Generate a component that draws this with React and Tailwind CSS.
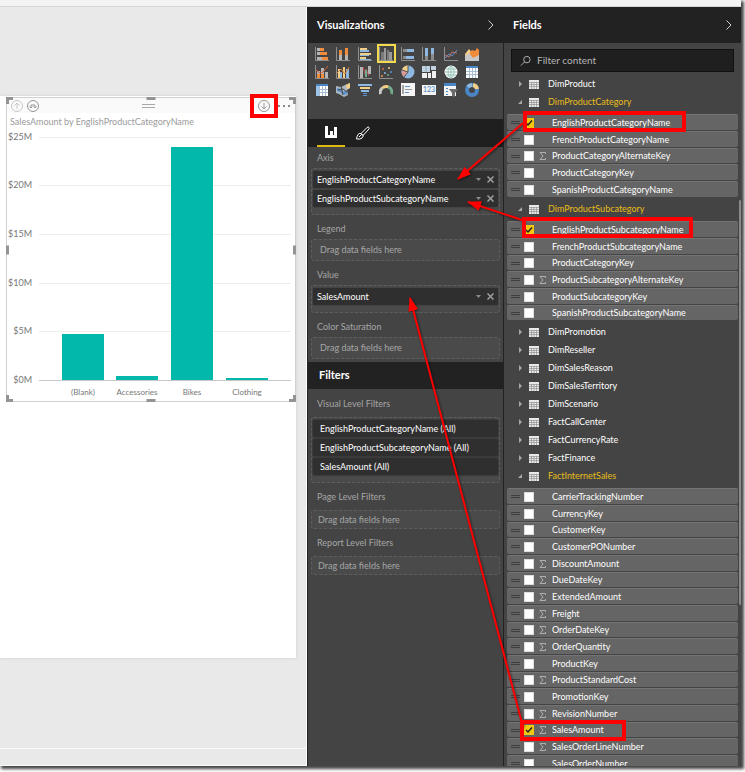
import { useState } from 'react';
import clsx from 'clsx';

const AXIS_TICKS = [
  { label: '$25M', y: 7 },
  { label: '$20M', y: 55 },
  { label: '$15M', y: 104 },
  { label: '$10M', y: 153 },
  { label: '$5M', y: 201 },
  { label: '$0M', y: 250 },
];

const BARS = [
  { label: '(Blank)', x: 55, top: 204 },
  { label: 'Accessories', x: 109, top: 246 },
  { label: 'Bikes', x: 164, top: 17 },
  { label: 'Clothing', x: 219, top: 248 },
];

const TABLES = [
  { name: 'DimProduct' },
  {
    name: 'DimProductCategory',
    fields: [
      { name: 'EnglishProductCategoryName', checked: true },
      { name: 'FrenchProductCategoryName' },
      { name: 'ProductCategoryAlternateKey', sum: true },
      { name: 'ProductCategoryKey' },
      { name: 'SpanishProductCategoryName' },
    ],
  },
  {
    name: 'DimProductSubcategory',
    fields: [
      { name: 'EnglishProductSubcategoryName', checked: true },
      { name: 'FrenchProductSubcategoryName' },
      { name: 'ProductCategoryKey' },
      { name: 'ProductSubcategoryAlternateKey', sum: true },
      { name: 'ProductSubcategoryKey' },
      { name: 'SpanishProductSubcategoryName' },
    ],
  },
  { name: 'DimPromotion' },
  { name: 'DimReseller' },
  { name: 'DimSalesReason' },
  { name: 'DimSalesTerritory' },
  { name: 'DimScenario' },
  { name: 'FactCallCenter' },
  { name: 'FactCurrencyRate' },
  { name: 'FactFinance' },
  {
    name: 'FactInternetSales',
    fields: [
      { name: 'CarrierTrackingNumber' },
      { name: 'CurrencyKey' },
      { name: 'CustomerKey' },
      { name: 'CustomerPONumber' },
      { name: 'DiscountAmount', sum: true },
      { name: 'DueDateKey', sum: true },
      { name: 'ExtendedAmount', sum: true },
      { name: 'Freight', sum: true },
      { name: 'OrderDateKey', sum: true },
      { name: 'OrderQuantity', sum: true },
      { name: 'ProductKey' },
      { name: 'ProductStandardCost', sum: true },
      { name: 'PromotionKey' },
      { name: 'RevisionNumber', sum: true },
      { name: 'SalesAmount', sum: true, checked: true },
      { name: 'SalesOrderLineNumber', sum: true },
      { name: 'SalesOrderNumber' },
    ],
  },
];

const O = '#f08c3c';
const B = '#8db8e0';
const Y = '#f3cf86';
const G = '#8c8c8c';

const AxisLines = () => <path d="M.5 0v13.5H14" fill="none" stroke="#909090" />;

const TableIcon = ({ head = '#4a86c5' }) => (
  <>
    <path d="M1 1h12v12H1z" fill="#fff" />
    <path d="M1 1h12v2H1z" fill={head} />
    <path d="M1 6.5h12M1 9.5h12M4.5 3v10M7.5 3v10M10.5 3v10" stroke="#a9bdd2" fill="none" />
  </>
);

// Gallery of visual types, left to right, top to bottom
const VISUALS = [
  ['Stacked bar chart', <><AxisLines /><path d="M2 1h5v3H2zM2 5h3v3H2zM2 10h6v3H2z" fill="#b5b5b5" /><path d="M5 1h4v3H5zM5 5h7v3H5zM7 10h6v3H7z" fill={O} /></>],
  ['Stacked column chart', <><AxisLines /><path d="M3 8h3v5H3zM9 6h3v7H9z" fill="#b5b5b5" /><path d="M3 3h3v5H3zM9 1h3v7H9z" fill={O} /></>],
  ['Clustered bar chart', <><AxisLines /><path d="M2 1h7v2H2zM2 6h11v2H2zM2 10h6v2H2z" fill={Y} /><path d="M2 3h9v2H2zM2 8h9v1H2zM2 12h11v1H2z" fill={B} /></>],
  ['Clustered column chart', <><AxisLines /><path d="M2 5h3v8H2zM8 3h2v10H8z" fill="#7b7b7b" /><path d="M5 1h2v12H5zM10 5h3v8h-3z" fill="#9a9a9a" /></>],
  ['100% stacked bar chart', <><AxisLines /><path d="M2 2h5v3H2zM2 9h3v3H2z" fill={G} /><path d="M6 2h7v3H6zM5 9h8v3H5z" fill={B} /></>],
  ['100% stacked column chart', <><AxisLines /><path d="M3 8h3v5H3zM9 7h3v6H9z" fill={G} /><path d="M3 1h3v8H3zM9 1h3v6H9z" fill={B} /></>],
  ['Line chart', <><AxisLines /><path d="M1 11l4-4 3 2 5-6" fill="none" stroke="#5b93cf" /><path d="M1 8l4 2 3-5 5 1" fill="none" stroke="#c4736a" /></>],
  ['Area chart', <><path d="M0 7l4-5 4 5v7H0z" fill={Y} /><path d="M5 5l2-2 3 1 2-3 2 2v8H5z" fill={O} /><path d="M0 9l4-3 4 5 6-3v6H0z" fill="#c8c8c8" /></>],
  ['Line and stacked column chart', <><AxisLines /><path d="M2 6h3v7H2zM6 3h3v10H6zM10 7h3v6h-3z" fill="#b5b5b5" /><path d="M2 9h3v4H2zM6 9h3v4H6z" fill={O} /><path d="M1 5l4 3 3-1 5-6" fill="none" stroke="#d8603b" /></>],
  ['Line and clustered column chart', <><AxisLines /><path d="M2 4h2v9H2zM7 2h2v11H7z" fill={Y} /><path d="M4 7h2v6H4zM10 4h3v9h-3z" fill={B} /><path d="M1 8l4-4 4 5 4-7" fill="none" stroke="#d8803b" /></>],
  ['Waterfall chart', <><AxisLines /><path d="M2 2h3v11H2zM10 1h3v8h-3z" fill="#b5b5b5" /><path d="M5 2l3 10V4l3 7" fill="none" stroke="#c4525a" /><path d="M7 5h2v7H7z" fill="#6fae8d" /></>],
  ['Scatter chart', <><AxisLines /><circle cx="4" cy="4" r="1" fill="#e06a4a" /><circle cx="6" cy="8" r="1" fill={B} /><circle cx="10" cy="3" r="1" fill={Y} /><circle cx="9" cy="10" r="1" fill="#6fae8d" /><circle cx="12" cy="7" r="1" fill="#5b93cf" /><circle cx="3" cy="11" r="1" fill={O} /></>],
  ['Pie chart', <><circle cx="7" cy="7" r="6.5" fill={B} /><path d="M7 7V.5A6.5 6.5 0 0 0 1 5z" fill={Y} /><path d="M7 7L1 5a6.5 6.5 0 0 0 2 7z" fill="#d89a93" /><path d="M7 .5V7L3 12M7 7L1 5" stroke="#555" fill="none" /></>],
  ['Treemap', <><path d="M0 1h8v6H0zM9 1h5v4H9z" fill="#c3d2e2" /><path d="M0 8h5v5H0zM6 8h3v5H6zM10 6h4v7h-4z" fill="#f0f0f0" /><path d="M4 1v6" stroke="#8aa" /></>],
  ['Map', <><circle cx="7" cy="7" r="6.5" fill="#fff" /><path d="M1 7h12M2 4h10M2 10h10M7 1v12" stroke="#8fbfb2" fill="none" /><ellipse cx="7" cy="7" rx="3" ry="6" fill="none" stroke="#8fbfb2" /></>],
  ['Table', <TableIcon />],
  ['Matrix', <><TableIcon /><path d="M1 3h3v10H1z" fill="#9cc3ea" /></>],
  ['Filled map', <><path d="M0 3l5 1 4-2 5-2v5l-3 2 1 5-4 2-5-3-3-1z" fill="#aeb7bf" /><path d="M1 5l4 1 2 3 4-2v4l-3 1-4-3-3-1z" fill="#5b93cf" /><path d="M10 2l4-2v5l-3 1z" fill={Y} /><path d="M2 7l5-1 4 3M5 3l2 9" stroke="#444" fill="none" /></>],
  ['Funnel', <><path d="M0 1h14v2H0z" fill={B} /><path d="M2 4h10v2H2z" fill={Y} /><path d="M3 7h8v2H3z" fill={B} /><path d="M5 10h4v1H5zM5 12h4v1H5z" fill="#5b93cf" /></>],
  ['Gauge', <g fill="none" strokeWidth="3"><path d="M1.500 11a5.500 5.500 0 0 1 2-6" stroke="#c9c9c9" /><path d="M3.500 5a5.500 5.500 0 0 1 6-1" stroke={Y} /><path d="M9.500 4a5.500 5.500 0 0 1 3 7" stroke="#6fae8d" /></g>],
  ['Multi-row card', <><path d="M0 0h14v13H0z" fill="#f4f4f4" /><path d="M2 2v9" stroke="#555" /><path d="M4 3.500h5M4 9.500h4" stroke="#5b93cf" /><path d="M4 6.500h7" stroke="#999" /></>],
  ['Card', <><path d="M0 2h14v10H0z" fill="#f4f4f4" /><text x="7" y="9" fontSize="7" textAnchor="middle" fill="#3f7fc0">123</text></>],
  ['Slicer', <><path d="M0 0h12v13H0z" fill="#f4f4f4" /><path d="M0 0h12v3H0z" fill="#4a86c5" /><path d="M2 5.500h2M2 8.500h2M2 11.500h2" stroke="#4a86c5" /><path d="M5 6h9l-3 4v4l-3-1v-3z" fill="#6c6c6c" /></>],
  ['Donut chart', <g fill="none" strokeWidth="4"><circle cx="7" cy="7" r="5" stroke="#4a86c5" /><path d="M3 4a5 5 0 0 1 4-2" stroke={B} /><path d="M8 2a5 5 0 0 1 4 4" stroke={Y} /></g>],
];

const Chevron = () => (
  <svg className="h-3 w-2" viewBox="0 0 8 12" fill="none" stroke="#d0d0d0">
    <path d="M1.500 1.500L6 6l-4.500 4.500" />
  </svg>
);

const PanelHeader = ({ title }) => (
  <div className="flex h-9 shrink-0 items-center justify-between bg-[#222] pl-[9px] pr-2">
    <h2 className="text-[11px] font-bold text-white">{title}</h2>
    <button type="button" aria-label={`Collapse ${title}`}>
      <Chevron />
    </button>
  </div>
);

const Well = ({ label, children, gap = 'mt-0.5', empty = 'h-[22px] pl-2' }) => (
  <section>
    <h3 className="pl-1.5 text-[9px] leading-4 text-[#a6a6a6]">{label}</h3>
    <div className={clsx('rounded-[3px] border border-dashed border-[#5e5e5e] bg-[#4a4a4a]', gap)}>
      {children ? (
        <div className="flex flex-col gap-0.5 px-px pb-[7px] pt-0.5">{children}</div>
      ) : (
        <p className={clsx('-my-px flex items-center text-[9px] text-[#a6a6a6]', empty)}>Drag data fields here</p>
      )}
    </div>
  </section>
);

const FieldPill = ({ name }) => (
  <div className="flex h-[17px] items-center rounded-[2px] bg-[#2f2f2f] pl-1 pr-1 text-[9px] text-white shadow-[0_0_1px_#1c1c1c]">
    <span className="flex-1 whitespace-nowrap">{name}</span>
    <button type="button" aria-label={`${name} options`} className="mr-1.5">
      <svg className="h-[3px] w-[5px]" viewBox="0 0 5 3" fill="#8a8a8a"><path d="M0 0h5L2.500 3z" /></svg>
    </button>
    <button type="button" aria-label={`Remove ${name}`}>
      <svg className="size-[7px]" viewBox="0 0 7 7" stroke="#a0a0a0" strokeWidth="1.500"><path d="M.5.5l6 6M6.500.5l-6 6" /></svg>
    </button>
  </div>
);

const FilterPill = ({ children }) => (
  <button type="button" className="flex h-[17px] items-center whitespace-nowrap rounded-[2px] bg-[#2f2f2f] pl-[7px] text-[9px] text-white shadow-[0_0_1px_1px_#3a3a3a]">
    {children}
  </button>
);

const ResizeHandles = () => (
  <>
    <i className="absolute -left-px -top-px size-[7px] border-l-3 border-t-3 border-[#939393]" />
    <i className="absolute -right-px -top-px size-[7px] border-r-3 border-t-3 border-[#939393]" />
    <i className="absolute -bottom-px -left-px size-[7px] border-b-3 border-l-3 border-[#939393]" />
    <i className="absolute -bottom-px -right-px size-[7px] border-b-3 border-r-3 border-[#939393]" />
    <i className="absolute -top-px left-1/2 h-[3px] w-[9px] -translate-x-1/2 bg-[#939393]" />
    <i className="absolute -bottom-px left-1/2 h-[3px] w-[9px] -translate-x-1/2 bg-[#939393]" />
    <i className="absolute -left-px top-1/2 h-[9px] w-[3px] -translate-y-1/2 bg-[#939393]" />
    <i className="absolute -right-px top-1/2 h-[9px] w-[3px] -translate-y-1/2 bg-[#939393]" />
  </>
);

const ColumnChart = () => (
  <div className="relative border border-[#d0d0d0] bg-white">
    <ResizeHandles />
    <div className="flex h-[15px] items-center bg-[#fafafa] pl-1 pr-[5px]">
      <button type="button" aria-label="Drill up" className="mr-1">
        <svg className="size-3" viewBox="0 0 12 12" fill="none" stroke="#c8c8c8">
          <circle cx="6" cy="6" r="5.500" />
          <path d="M6 9V3M3.500 5.500L6 3l2.500 2.500" />
        </svg>
      </button>
      <button type="button" aria-label="Expand to next level">
        <svg className="size-3" viewBox="0 0 12 12" fill="none" stroke="#979797">
          <circle cx="6" cy="6" r="5.500" />
          <path d="M4 7.500V5h4v2.500M2.500 6.500L4 8l1.500-1.500M6.500 6.500L8 8l1.500-1.500" />
        </svg>
      </button>
      <span className="mx-auto h-1 w-[13px] border-y border-[#a8a8a8]" />
      <span className="relative mr-2">
        <button type="button" aria-label="Drill down" className="block">
          <svg className="size-3" viewBox="0 0 12 12" fill="none" stroke="#979797">
            <circle cx="6" cy="6" r="5.500" />
            <path d="M6 3v6M3.500 6.500L6 9l2.500-2.500" />
          </svg>
        </button>
        <i className="absolute -inset-x-2 -inset-y-[6px] border-4 border-[#ff0000]" />
      </span>
      <button type="button" aria-label="More options">
        <svg className="h-[2px] w-3" viewBox="0 0 12 2" fill="#8a8a8a">
          <path d="M0 0h2v2H0zM5 0h2v2H5zM10 0h2v2h-2z" />
        </svg>
      </button>
    </div>
    <h1 className="pl-[3px] pt-px text-[9px] leading-4 text-[#9a9a9a]">SalesAmount by EnglishProductCategoryName</h1>
    <svg className="block w-full" viewBox="0 0 288 271" fontSize="8">
      {AXIS_TICKS.map(({ label, y }) => (
        <g key={label}>
          <path d={`M32 ${y}.5h252`} stroke={label === '$0M' ? '#c8c8c8' : '#ececec'} />
          <text x="25" y={y + 3} textAnchor="end" fill="#777" fontSize="9">{label}</text>
        </g>
      ))}
      {BARS.map(({ label, x, top }) => (
        <g key={label}>
          <rect x={x} y={top} width="42" height={250 - top} fill="#01b8aa" />
          <text x={x + 21} y="265" textAnchor="middle" fill="#777">{label}</text>
        </g>
      ))}
    </svg>
  </div>
);

const VisualizationsPanel = () => (
  <aside className="flex w-[196px] flex-col border-r border-[#222] bg-[#444]">
    <PanelHeader title="Visualizations" />
    <div className="h-[76px] shrink-0 pl-[5px] pt-0.5">
      <div className="grid w-[172px] grid-cols-8 gap-y-px">
        {VISUALS.map(([name, icon]) => (
          <button
            key={name}
            type="button"
            aria-label={name}
            className={clsx(
              'flex size-[17px] items-center justify-center',
              name === 'Clustered column chart' && 'outline-2 -outline-offset-1 outline-[#f2d94e]'
            )}
          >
            <svg className="size-[14px]" viewBox="0 0 14 14">{icon}</svg>
          </button>
        ))}
      </div>
    </div>
    <div className="flex h-7 shrink-0 bg-[#1f1f1f] pl-[9px]">
      <button type="button" aria-label="Fields" className="flex w-7 items-center justify-center border-b-2 border-[#e0b90f]">
        <svg className="h-3 w-3" viewBox="0 0 12 12">
          <path d="M0 0h3v9h2V5h3v4h1V1h3v11H0z" fill="#fff" />
        </svg>
      </button>
      <button type="button" aria-label="Format" className="ml-1 flex w-7 items-center justify-center">
        <svg className="size-[14px]" viewBox="0 0 14 14" fill="none" stroke="#fff">
          <path d="M5 7.500L11 1.500q1.500-1 2 0t0 1.500L7 9.500z" />
          <path d="M5 7.500q-2-.5-3 1T.5 13q4 .5 5.500-1t1-2.500z" />
          <path d="M3 11l3-3" />
        </svg>
      </button>
    </div>
    <div className="flex flex-col gap-1.5 px-[3px] pb-0.5 pt-[3px]">
      <Well label="Axis">
        <FieldPill name="EnglishProductCategoryName" />
        <FieldPill name="EnglishProductSubcategoryName" />
      </Well>
      <Well label="Legend" />
      <Well label="Value">
        <FieldPill name="SalesAmount" />
      </Well>
      <Well label="Color Saturation" />
    </div>
    <h2 className="mt-px flex h-[27px] shrink-0 items-center bg-[#222] pl-[11px] text-[11px] font-bold text-white">Filters</h2>
    <div className="flex flex-col gap-1.5 px-[3px] pt-[7px]">
      <Well label="Visual Level Filters" gap="mt-[5px]">
        <FilterPill>EnglishProductCategoryName (All)</FilterPill>
        <FilterPill>EnglishProductSubcategoryName (All)</FilterPill>
        <FilterPill>SalesAmount (All)</FilterPill>
      </Well>
      <Well label="Page Level Filters" gap="mt-[5px]" empty="h-[19px] pl-1.5" />
      <Well label="Report Level Filters" gap="mt-[5px]" empty="h-[19px] pl-1.5" />
    </div>
  </aside>
);

const FieldRow = ({ table, field }) => {
  const [checked, setChecked] = useState(Boolean(field.checked));
  const id = `${table}-${field.name}`;

  return (
    <li className="flex h-4 items-center rounded-[2px] border-t border-[#747474] bg-[#656565] pl-1 nth-[3n]:h-[15px]">
      <span className="h-[3px] w-[9px] border-y border-[#3e3e3e]" />
      <span className="relative ml-1 size-2.5">
        <input
          id={id}
          type="checkbox"
          checked={checked}
          onChange={(e) => setChecked(e.target.checked)}
          className="block size-2.5 appearance-none border border-[#ddd] bg-white checked:border-[#f2c811] checked:bg-[#f2c811]"
        />
        {checked && (
          <svg className="pointer-events-none absolute inset-0 size-2.5" viewBox="0 0 10 10" fill="none" stroke="#222" strokeWidth="1.500">
            <path d="M2 5l2 2 4-4.500" />
          </svg>
        )}
      </span>
      <span className="w-[18px] pl-[5px]">
        {field.sum && (
          <svg className="h-2 w-[7px]" viewBox="0 0 7 8" fill="none" stroke="#b0b0b0">
            <path d="M6.500 2V.5H1L4 4 1 7.500h5.500V6" />
          </svg>
        )}
      </span>
      <label htmlFor={id} className="whitespace-nowrap text-[9px] text-white">{field.name}</label>
    </li>
  );
};

const TableNode = ({ table }) => {
  const open = Boolean(table.fields);

  return (
    <li>
      <button type="button" aria-expanded={open} className="flex h-[18px] w-full items-center pl-[10px]">
        <svg className="mr-1.5 size-[6px]" viewBox="0 0 6 6" fill="#a8a8a8">
          <path d={open ? 'M5 1v4H1z' : 'M2 0l3 3-3 3z'} />
        </svg>
        <svg className="mr-[9px] h-[9px] w-[10px]" viewBox="0 0 10 9">
          <path d="M0 0h10v9H0z" fill="#e8e8e8" />
          <path d="M0 2.500h10M0 4.500h10M0 6.500h10M2.500 2v7M5 2v7M7.500 2v7" stroke="#777" strokeWidth=".5" />
        </svg>
        <span className={clsx('whitespace-nowrap text-[9px]', open ? 'text-[#e8bd1a]' : 'text-white')}>{table.name}</span>
      </button>
      {open && (
        <ul className="flex flex-col gap-px py-[3px]">
          {table.fields.map((field) => (
            <FieldRow key={field.name} table={table.name} field={field} />
          ))}
        </ul>
      )}
    </li>
  );
};

const FieldsPanel = () => {
  const [query, setQuery] = useState('');
  const tables = TABLES.filter((t) => t.name.toLowerCase().includes(query.toLowerCase()));

  return (
    <aside className="relative flex w-[237px] flex-col overflow-hidden bg-[#444]">
      <PanelHeader title="Fields" />
      <div className="mx-[7px] mt-1.5 flex h-[23px] shrink-0 items-center border border-[#111] bg-[#1f1f1f] pl-2">
        <svg className="mr-1.5 size-3" viewBox="0 0 12 12" fill="none" stroke="#b8b8b8">
          <circle cx="7.500" cy="4.500" r="3.500" />
          <path d="M5 7L1 11" />
        </svg>
        <input
          type="text"
          aria-label="Filter content"
          placeholder="Filter content"
          value={query}
          onChange={(e) => setQuery(e.target.value)}
          className="w-full bg-transparent text-[10px] text-white outline-none placeholder:text-[#b5b5b5]"
        />
      </div>
      <ul className="min-h-0 flex-1 overflow-hidden px-[3px] pt-[3px]">
        {tables.map((table) => (
          <TableNode key={table.name} table={table} />
        ))}
      </ul>
      {/* scrollbar thumb */}
      <i className="absolute right-0 top-[193px] h-[405px] w-[2px] rounded-full bg-[#8a8a8a]" />
    </aside>
  );
};

// Callouts linking each checked field to the well it landed in
const Callouts = () => (
  <svg className="pointer-events-none absolute left-0 top-0" width="434" height="759" fill="none" stroke="#ff0000">
    <defs>
      <marker id="head" viewBox="0 0 14 10" refX="13" refY="5" markerWidth="14" markerHeight="10" markerUnits="userSpaceOnUse" orient="auto">
        <path d="M0 0l14 5-14 5z" fill="#ff0000" stroke="none" />
      </marker>
    </defs>
    <g className="drop-shadow-[1px_1px_1px_rgba(0,0,0,0.5)]" strokeWidth="2">
      <path d="M215 116L150 172" markerEnd="url(#head)" />
      <path d="M217 214L160 195" markerEnd="url(#head)" />
      <path d="M215 720L102 291" markerEnd="url(#head)" />
    </g>
    <g strokeWidth="4">
      <rect x="217" y="106" width="159" height="17" />
      <rect x="216" y="212" width="167" height="17" />
      <rect x="214" y="715" width="102" height="17" />
    </g>
  </svg>
);

const App = () => {
  return (
    <div className="flex h-screen flex-col bg-white pb-1.5 pr-1 font-[Lato,sans-serif]">
      <div className="flex min-h-0 flex-1 flex-col shadow-[2px_2px_3px_1px_#444]">
        <div className="h-[7px] shrink-0 border-b border-[#d4d4d4] bg-[#f3f3f3]" />
        <div className="flex min-h-0 flex-1">
          <main className="flex min-w-0 flex-1 flex-col border-r border-white bg-[#e9e9e9]">
            <div className="mr-[10px] mt-[89px] h-[562px] bg-white pl-1.5 pt-px shadow-[0_0_3px_#ccc]">
              <ColumnChart />
            </div>
            <div className="mt-auto h-[18px] border-y-1 border-[#fafafa]" />
          </main>
          <div className="relative flex shrink-0 border-l border-[#222]">
            <VisualizationsPanel />
            <FieldsPanel />
            <Callouts />
          </div>
        </div>
      </div>
    </div>
  );
};

export default App;
